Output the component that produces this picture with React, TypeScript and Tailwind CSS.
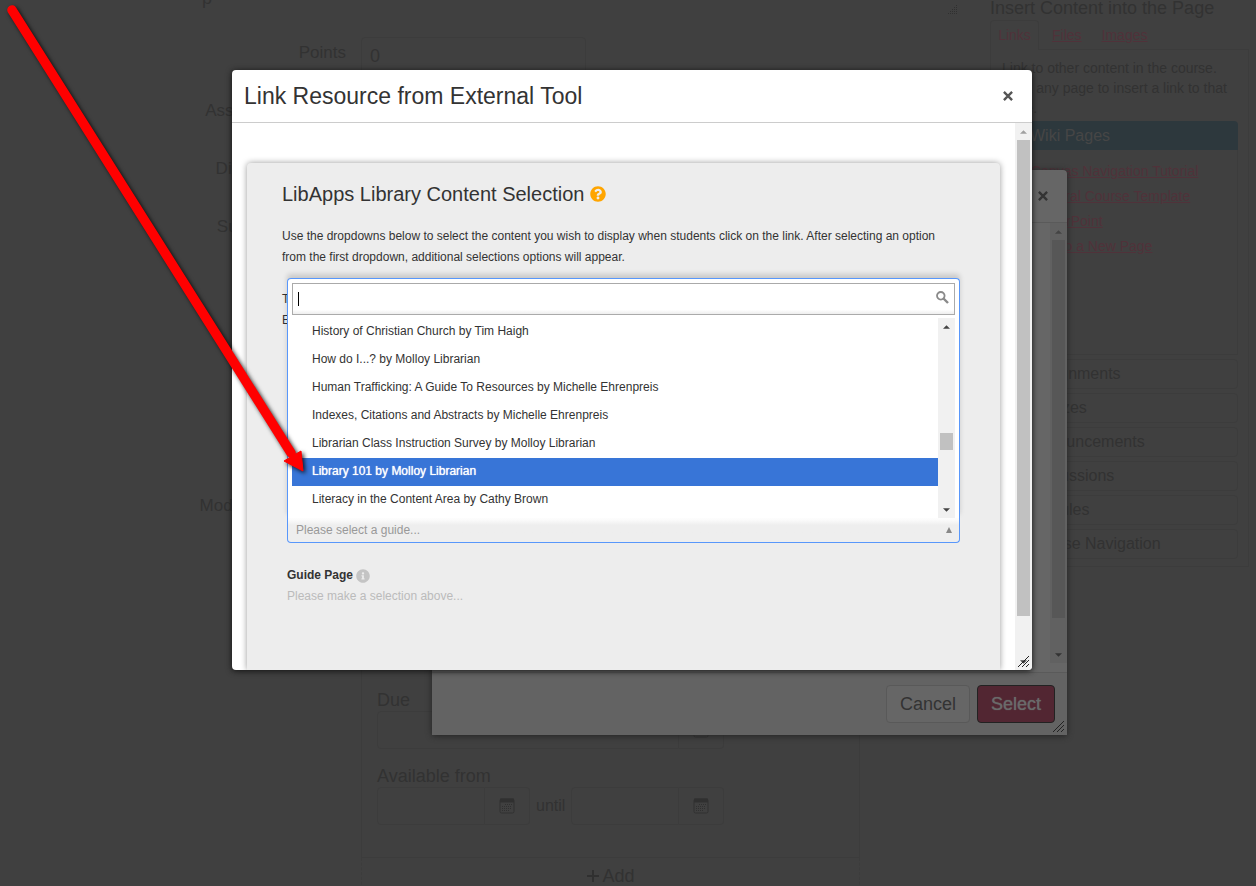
import type { ReactNode } from 'react';
import { FaInfoCircle, FaQuestionCircle } from 'react-icons/fa';

const guides = [
  'History of Christian Church by Tim Haigh',
  'How do I...? by Molloy Librarian',
  'Human Trafficking: A Guide To Resources by Michelle Ehrenpreis',
  'Indexes, Citations and Abstracts by Michelle Ehrenpreis',
  'Librarian Class Instruction Survey by Molloy Librarian',
  'Library 101 by Molloy Librarian',
  'Literacy in the Content Area by Cathy Brown',
];

const selectedGuide = 'Library 101 by Molloy Librarian';

const wikiPages = [
  'Canvas Navigation Tutorial',
  'General Course Template',
  'PowerPoint',
  'Link to a New Page',
];

const sections = [
  'Assignments',
  'Quizzes',
  'Announcements',
  'Discussions',
  'Modules',
  'Course Navigation',
];

function CloseIcon() {
  return (
    <svg width="10" height="10" viewBox="0 0 11 11" fill="none" stroke="currentColor" strokeWidth="2.6">
      <path d="M1 1l9 9M10 1L1 10" />
    </svg>
  );
}

function ResizeGrip() {
  return (
    <svg
      className="absolute right-[3px] bottom-[3px] text-[#222]"
      width="11"
      height="11"
      viewBox="0 0 11 11"
      stroke="currentColor"
      shapeRendering="crispEdges"
    >
      <path d="M0 11L11 0M4 11L11 4M8 11L11 8" />
    </svg>
  );
}

function ArrowTip({ down = false }: { down?: boolean }) {
  return (
    <svg width="7" height="4" viewBox="0 0 8 4" fill="currentColor">
      <path d={down ? 'M0 0h8L4 4z' : 'M0 4h8L4 0z'} />
    </svg>
  );
}

function CalendarGlyph() {
  return (
    <svg width="16" height="16" viewBox="0 0 16 16" fill="none" stroke="#303030">
      <rect x="1" y="1" width="14" height="14" rx="1.5" />
      <path d="M1 2.5h14" strokeWidth="4" />
      <path d="M6 6.5h7M3 8.5h10M3 10.5h10M3 12.5h7" strokeDasharray="1 1" />
    </svg>
  );
}

function DateField({ label, wide = false }: { label: string; wide?: boolean }) {
  return (
    <span className={`flex h-[38px] ${wide ? 'w-[347px]' : 'w-[153px]'}`}>
      <input
        type="text"
        aria-label={label}
        className="min-w-0 flex-1 rounded-l border border-[#3c3c3c] bg-transparent px-2"
      />
      <button
        type="button"
        aria-label={`${label} calendar`}
        className="flex w-[45px] items-center justify-center rounded-r border border-l-0 border-[#3c3c3c]"
      >
        <CalendarGlyph />
      </button>
    </span>
  );
}

function FormRow({ label, children }: { label: string; children?: ReactNode }) {
  return (
    <div className="flex h-[58px] items-start gap-[15px]">
      <span className="w-[346px] shrink-0 pt-[6px] text-right text-[17px]">{label}</span>
      {children}
    </div>
  );
}

function AssignmentForm() {
  return (
    <main className="min-w-0 flex-1 text-lg leading-5">
      <div className="flex h-[37px] items-start justify-between pl-[202px]">
        <span className="-mt-3">p</span>
        <svg className="mt-1 mr-8" width="10" height="10" viewBox="0 0 10 10" stroke="#303030" strokeDasharray="1 1">
          <path d="M0 9.5h10M2 7.5h8M4 5.5h6M6 3.5h4M8 1.5h2" />
        </svg>
      </div>
      <FormRow label="Points">
        <input
          type="text"
          aria-label="Points"
          defaultValue="0"
          className="h-[38px] w-[225px] rounded border border-[#3c3c3c] bg-transparent px-2"
        />
      </FormRow>
      <FormRow label="Assignment Group" />
      <FormRow label="Display Grade as" />
      <FormRow label="Submission Type" />
      <div className="h-[221px]" />
      <FormRow label="Moderated Grading" />
      <div className="mr-[130px] ml-[361px] max-w-[500px]">
        <div className="h-[310px] border border-[#3c3c3c] px-[15px] pt-[141px]">
          <p className="h-[21px]">Due</p>
          <DateField label="Due" wide />
          <p className="mt-[17px] h-[21px]">Available from</p>
          <div className="flex items-center gap-[6px]">
            <DateField label="Available from" />
            <span className="text-base">until</span>
            <DateField label="Available until" />
          </div>
        </div>
        <button
          type="button"
          className="flex h-9 w-full items-center justify-center gap-[2px] border border-t-0 border-dashed border-[#3c3c3c] text-lg"
        >
          <svg width="14" height="14" viewBox="0 0 14 14" stroke="#303030" strokeWidth="2">
            <path d="M7 1v12M1 7h12" />
          </svg>
          Add
        </button>
      </div>
    </main>
  );
}

function ContentSidebar() {
  return (
    <aside className="w-[266px] shrink-0 pr-[7px] text-sm leading-5">
      <h2 className="h-5 text-lg leading-4">Insert Content into the Page</h2>
      <nav className="flex h-[30px] text-[#50323a]">
        <a href="#links" className="w-[49px] rounded-t border border-b-0 border-[#3c3c3c] pt-1 text-center">
          Links
        </a>
        <span className="flex flex-1 gap-5 border-b border-[#3c3c3c] pt-[5px] pl-[13px]">
          <a href="#files" className="underline">Files</a>
          <a href="#images" className="underline">Images</a>
        </span>
      </nav>
      <div className="border border-t-0 border-[#3c3c3c] pt-2 pr-[10px] pb-[7px] pl-[11px]">
        <p className="h-[63px]">
          Link to other content in the course. Click any page to insert a link to that page.
        </p>
        <h3 className="rounded-t bg-[#2d383d] py-1 pl-7 text-base leading-[21px] text-[#464646]">
          Wiki Pages
        </h3>
        <ul className="h-[205px] border border-t-0 border-[#3c3c3c] pt-[11px] pl-7 text-[#50323a]">
          {wikiPages.map((page) => (
            <li key={page} className="h-[25px]">
              <a href="#page" className="underline">{page}</a>
            </li>
          ))}
        </ul>
        <div className="mt-1 flex flex-col gap-1">
          {sections.map((section) => (
            <h3 key={section} className="h-[30px] rounded border border-[#3c3c3c] pl-[26px] text-base leading-7">
              {section}
            </h3>
          ))}
        </div>
      </div>
    </aside>
  );
}

function SelectToolDialog() {
  return (
    <section
      aria-label="Select tool"
      className="absolute top-[170px] left-[432px] flex h-[565px] w-[635px] flex-col rounded-sm bg-[#666] text-[#333] shadow-[0_1px_6px_#222]"
    >
      <header className="flex h-[53px] items-center justify-end border-b border-[#5a5a5a] pr-[19px]">
        <button type="button" aria-label="Close tool list">
          <CloseIcon />
        </button>
      </header>
      <div className="flex h-[440px] justify-end">
        <div className="flex w-[17px] flex-col items-center bg-[#616161]">
          <span className="flex h-[17px] items-center text-[#444]">
            <ArrowTip />
          </span>
          <span className="h-[378px] w-[13px] bg-[#575757]" />
          <span className="mt-auto flex h-[17px] items-center text-[#333]">
            <ArrowTip down />
          </span>
        </div>
      </div>
      <footer className="mt-auto flex h-[63px] items-start justify-end gap-[7px] border-t border-[#5a5a5a] bg-[#636363] pt-3 pr-3 text-lg leading-6">
        <button type="button" className="h-[38px] rounded border border-[#595959] bg-[#666] px-[13px]">
          Cancel
        </button>
        <button
          type="button"
          className="h-[38px] rounded border border-[#222] bg-[#522632] px-[13px] text-[#6a6a6a] [text-shadow:0_0_1px_#6a6a6a]"
        >
          Select
        </button>
      </footer>
      <ResizeGrip />
    </section>
  );
}

function GuidePicker() {
  return (
    <div className="relative rounded-b border border-t-0 border-[#5897fb] bg-gradient-to-b from-white to-[#eee] to-30%">
      <button type="button" className="flex h-6 w-full items-center justify-between pr-[7px] pl-2 text-[#999]">
        Please select a guide...
        <svg width="6" height="6" viewBox="0 0 6 6" fill="#888">
          <path d="M0 6h6L3 0z" />
        </svg>
      </button>

      {/* Opens upwards from the closed select */}
      <div className="absolute -right-px -left-px bottom-full rounded-t border border-b-0 border-[#5897fb] bg-white px-1 pt-1 shadow-[0_-4px_5px_rgba(0,0,0,0.15)]">
        <div className="flex h-8 items-center border border-[#aaa] bg-gradient-to-t from-[#eee] to-white to-15% pr-[5px]">
          <span className="ml-[5px] h-[14px] w-px bg-black" />
          <input type="text" aria-label="Search guides" className="min-w-0 flex-1 bg-transparent outline-none" />
          <svg className="mb-1" width="13" height="13" viewBox="0 0 13 13" fill="none" stroke="#8a8a8a">
            <circle cx="4.8" cy="4.8" r="3.8" strokeWidth="1.8" />
            <path d="M7.5 7.5l4.5 4.5" strokeWidth="2.4" />
          </svg>
        </div>
        <div className="mt-[3px] flex h-[200px]">
          <ul className="min-w-0 flex-1 overflow-hidden text-[#333]">
            {guides.map((guide) => (
              <li
                key={guide}
                className={
                  guide === selectedGuide
                    ? 'h-7 bg-[#3875d7] pl-5 leading-[26px] text-white [text-shadow:0_0_1px_#fff]'
                    : 'h-7 pl-5 leading-[26px]'
                }
              >
                {guide}
              </li>
            ))}
          </ul>
          <div className="flex w-[17px] flex-col items-center bg-[#f1f1f1] text-[#444]">
            <span className="flex h-[17px] items-center">
              <ArrowTip />
            </span>
            <span className="mt-[98px] h-[17px] w-[13px] bg-[#c1c1c1]" />
            <span className="mt-auto flex h-[17px] items-center">
              <ArrowTip down />
            </span>
          </div>
        </div>
      </div>
    </div>
  );
}

function ExternalToolDialog() {
  return (
    <section
      aria-labelledby="dialog-title"
      className="absolute top-[70px] left-[232px] flex h-[600px] w-[800px] flex-col overflow-hidden rounded-sm bg-white text-[#333] shadow-[0_1px_6px_#111]"
    >
      <header className="flex h-[53px] shrink-0 items-center justify-between border-b border-[#ccc] pr-[19px] pl-3">
        <h1 id="dialog-title" className="text-[23px] leading-8">
          Link Resource from External Tool
        </h1>
        <button type="button" aria-label="Close" className="text-[#555]">
          <CloseIcon />
        </button>
      </header>
      <div className="flex min-h-0 flex-1">
        <div className="min-w-0 flex-1 px-[15px] pt-10">
          <div className="h-full rounded-t bg-[#ededed] pt-[15px] pr-10 pl-[35px] text-xs leading-[21px] shadow-[0_0_6px_rgba(0,0,0,0.4)]">
            <h2 className="flex items-center gap-[6px] text-xl leading-8">
              LibApps Library Content Selection
              <FaQuestionCircle size={16} className="text-[#ffa500]" />
            </h2>
            <p className="mt-4">
              Use the dropdowns below to select the content you wish to display when students click on
              the link. After selecting an option from the first dropdown, additional selections options
              will appear.
            </p>
            <p className="mt-[21px] h-[229px]">
              Type
              <br />
              Edit
            </p>
            <div className="ml-[5px]">
              <GuidePicker />
              <h3 className="mt-[22px] flex items-center gap-[3px] font-bold">
                Guide Page
                <FaInfoCircle size={14} className="text-[#c4c4c4]" />
              </h3>
              <p className="text-[#bbb]">Please make a selection above...</p>
            </div>
          </div>
        </div>
        <div className="flex w-[17px] flex-col items-center bg-[#f1f1f1]">
          <span className="flex h-[17px] items-center text-[#a0a0a0]">
            <ArrowTip />
          </span>
          <span className="h-[476px] w-[13px] bg-[#c1c1c1]" />
          <span className="mt-auto flex h-[17px] items-center text-[#444]">
            <ArrowTip down />
          </span>
        </div>
      </div>
      <ResizeGrip />
    </section>
  );
}

function PointerArrow() {
  return (
    <svg
      className="pointer-events-none absolute top-0 left-0 drop-shadow-[2px_2px_2px_rgba(0,0,0,0.8)]"
      width="320"
      height="490"
      viewBox="0 0 320 490"
      fill="#f00"
    >
      <path d="M12 10L291 453" stroke="#f00" strokeWidth="9.5" strokeLinecap="round" />
      <path d="M303 471L301 451L284 461z" stroke="#f00" strokeLinejoin="round" />
    </svg>
  );
}

export default function App() {
  return (
    <div className="relative h-screen min-h-[600px] overflow-hidden bg-[#404040] font-['Liberation_Sans',Arial,sans-serif] text-[#323232]">
      <div className="flex">
        <AssignmentForm />
        <ContentSidebar />
      </div>
      <SelectToolDialog />
      <ExternalToolDialog />
      <PointerArrow />
    </div>
  );
}
